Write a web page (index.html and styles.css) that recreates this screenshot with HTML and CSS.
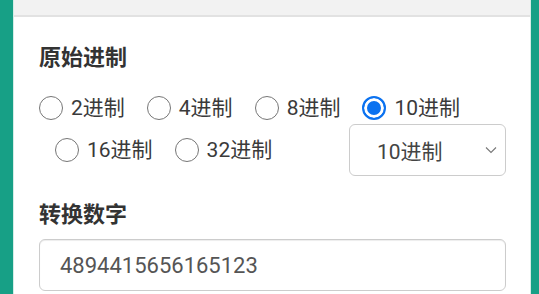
FILE: index.html
```html
<!DOCTYPE html>
<html lang="zh-CN">
<head>
<meta charset="utf-8">
<title>进制转换</title>
<link rel="stylesheet" href="styles.css">
</head>
<body>
<div class="page">
  <div class="card">
    <div class="card-header"></div>
    <div class="card-body">
      <div class="field-title">原始进制</div>
      <div class="radio-row">
        <label class="radio"><span class="dot"></span><span class="txt">2进制</span></label>
        <label class="radio"><span class="dot"></span><span class="txt">4进制</span></label>
        <label class="radio"><span class="dot"></span><span class="txt">8进制</span></label>
        <label class="radio checked"><span class="dot"></span><span class="txt">10进制</span></label>
      </div>
      <div class="radio-row second">
        <label class="radio"><span class="dot"></span><span class="txt">16进制</span></label>
        <label class="radio"><span class="dot"></span><span class="txt">32进制</span></label>
        <div class="select">
          <span class="select-text">10进制</span>
          <svg class="chev" width="12" height="8" viewBox="0 0 12 8"><path d="M1 1.5 L6 6.5 L11 1.5" fill="none" stroke="#777" stroke-width="1.1"/></svg>
        </div>
      </div>
      <div class="field-title title2">转换数字</div>
      <div class="input">4894415656165123</div>
    </div>
  </div>
</div>
</body>
</html>
```

FILE: styles.css
```css
html, body {
  margin: 0;
  padding: 0;
}
body {
  font-family: Roboto, "Noto Sans CJK SC", sans-serif;
  color: #333;
  background: #17a086;
}
.page {
  height: 294px;
  overflow: hidden;
  padding: 0 8px 0 13px;
  box-sizing: border-box;
}
.card {
  background: #fff;
  border-left: 1px solid #d4ece6;
  border-right: 1px solid #d4ece6;
  height: 100%;
}
.card-header {
  height: 15px;
  background: #f2f2f2;
  border-bottom: 2px solid #e2e2e2;
}
.card-body {
  padding: 28px 24px 0 25px;
}
.field-title {
  font-size: 22px;
  line-height: 26px;
  font-weight: 700;
  color: #333;
}
.radio-row {
  display: flex;
  align-items: center;
  height: 28px;
  margin-top: 23px;
}
.radio-row.second {
  height: 52px;
  margin-top: 2px;
  padding-left: 16px;
}
.radio {
  display: flex;
  align-items: center;
  margin-right: 22px;
  font-size: 21px;
  line-height: 28px;
  color: #3a3a3a;
}
.dot {
  width: 24px;
  height: 24px;
  box-sizing: border-box;
  border: 1.5px solid #767676;
  border-radius: 50%;
  margin-right: 8px;
  flex: none;
}
.radio.checked .dot {
  border: 2.5px solid #0b72f0;
  background: #0b72f0;
  box-shadow: inset 0 0 0 3px #fff;
}
.select {
  margin-left: auto;
  width: 157px;
  height: 52px;
  box-sizing: border-box;
  border: 1px solid #ccc;
  border-radius: 6px;
  display: flex;
  align-items: center;
  padding: 0 8px 0 27px;
  font-size: 21px;
  color: #444;
}
.select-text {
  flex: 1;
}
.chev {
  display: block;
}
.title2 {
  margin-top: 26px;
}
.input {
  margin-top: 11px;
  height: 52px;
  box-sizing: border-box;
  border: 1px solid #ccc;
  border-radius: 6px;
  box-shadow: inset 0 1px 1px rgba(0,0,0,0.075);
  padding: 0 20px;
  display: flex;
  align-items: center;
  font-size: 22px;
  color: #555;
}
```
